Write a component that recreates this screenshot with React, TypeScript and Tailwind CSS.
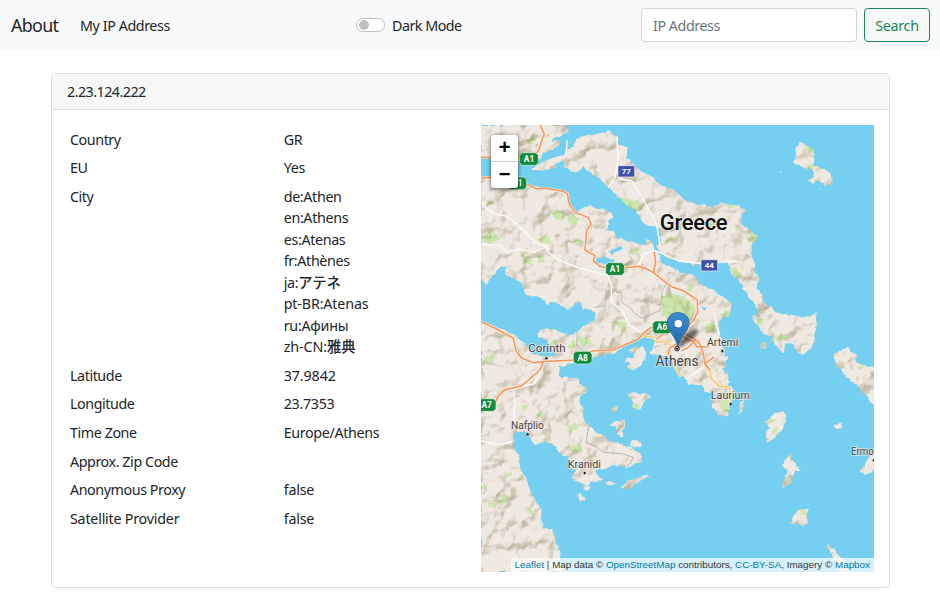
import type { ReactNode } from "react";

const MAINLAND =
  "M3,155 30,160 60,178 130,178 150,186 175,190 245,200 264,208 268,240 280,262 290,268 300,258 325,243 345,255 370,257 390,265 400,280 385,290 388,305 375,320 400,325 412,342 430,345 460,358 495,364 502,345 515,352 522,374 535,388 545,418 570,426 600,446 640,452 665,483 695,493 718,512 740,524 755,538 750,573 730,578 715,593 720,628 735,678 730,695 745,700 730,738 745,748 745,783 758,790 760,803 748,848 745,873 732,874 715,873 705,860 693,848 695,820 695,808 675,803 665,783 640,782 625,778 605,750 590,728 570,697 510,690 520,668 525,648 495,638 470,643 440,660 400,690 340,700 300,712 240,728 235,758 270,762 290,763 300,780 320,790 320,805 300,818 298,838 312,850 305,868 312,895 335,908 350,925 370,933 385,950 410,958 430,965 450,968 480,988 487,1013 462,1020 440,1032 430,1028 400,1024 380,1033 345,1043 355,1060 370,1066 345,1072 330,1073 322,1085 333,1093 320,1101 308,1092 315,1084 305,1078 275,1063 285,1040 268,1028 270,1008 260,998 240,993 225,965 200,952 165,963 140,928 125,920 110,923 98,933 105,950 103,975 118,1000 120,1038 140,1065 150,1098 165,1130 185,1158 182,1190 190,1213 215,1213 222,1240 235,1268 240,1298 250,1344 3,1344 3,593 60,610 105,633 130,658 160,688 190,698 225,693 215,678 200,648 172,638 180,618 210,611 240,625 265,633 290,628 305,608 340,593 345,563 310,556 300,533 265,556 250,548 210,533 205,545 195,533 175,518 135,513 125,478 75,448 80,428 65,423 55,438 30,458 20,486 3,463Z";

const ISLANDS = [
  "M3,3 185,3 260,3 265,18 238,40 220,42 213,54 240,48 232,68 205,82 190,88 186,100 165,112 120,112 75,105 35,100 3,100Z",
  "M155,137 175,120 200,108 230,98 258,88 258,75 278,70 285,50 310,36 350,30 370,26 380,18 390,20 395,30 410,35 415,60 440,70 443,85 438,100 448,110 470,135 495,148 510,155 530,172 555,190 580,195 600,215 610,228 645,238 695,248 725,238 760,240 798,258 785,270 783,300 820,325 835,338 815,360 815,395 825,420 827,448 838,465 828,492 850,513 847,533 875,553 885,563 915,573 960,580 975,580 1010,568 1004,630 1005,650 990,673 970,693 955,688 940,663 915,658 912,685 900,680 885,658 875,638 850,630 830,603 815,578 835,563 825,538 805,518 800,505 785,494 790,483 770,462 755,450 750,430 740,415 700,410 670,418 645,423 610,413 590,412 550,398 540,380 528,366 540,352 545,330 530,308 490,300 470,260 450,252 420,225 385,190 350,155 310,132 285,142 265,138 252,130 250,110 225,120 230,130 195,140Z",
  "M960,53 975,62 1000,78 1003,92 1002,122 1020,130 1052,148 1056,180 1035,185 1015,168 1000,180 985,168 1000,160 1002,138 975,132 950,122 938,115 950,95 945,75Z",
  "M895,140 903,140 903,145 895,145Z",
  "M1018,190 1027,192 1020,195Z",
  "M1062,690 1080,680 1105,668 1112,685 1130,690 1125,712 1145,722 1182,728 1182,845 1155,815 1140,795 1120,775 1100,760 1085,735 1070,728 1062,710Z",
  "M838,665 850,658 856,650 860,665 856,674 840,674Z",
  "M445,590 465,585 480,585 480,570 470,575 468,560 490,558 497,565 495,590 475,610 460,625 435,618 435,608 450,605Z",
  "M445,680 470,667 490,668 497,685 497,710 480,725 460,738 440,728 450,718 435,715 440,702 462,702 460,685Z",
  "M443,812 455,808 500,808 510,815 500,825 490,840 480,858 460,852 462,835 448,825Z",
  "M395,855 405,845 415,848 408,862 398,865Z",
  "M388,900 410,892 435,888 435,908 425,922 430,940 410,930 405,910Z",
  "M448,960 465,948 485,958 485,968 455,970Z",
  "M375,1073 395,1070 408,1075 400,1084 382,1082Z",
  "M420,1092 450,1068 480,1058 495,1054 512,1060 490,1065 470,1078 440,1095Z",
  "M287,1112 300,1108 315,1122 313,1132 300,1128Z",
  "M870,882 885,865 905,863 920,872 918,890 905,920 880,945 860,957 858,925 870,910 855,895Z",
  "M775,878 780,840 795,823 790,850Z",
  "M932,985 933,1000 945,1020 960,1038 945,1040 935,1070 915,1090 904,1095 912,1070 920,1040 905,1023Z",
  "M955,1158 985,1158 980,1175 985,1195 970,1210 960,1200 930,1200 940,1175Z",
  "M1040,1260 1065,1278 1080,1298 1095,1312 1105,1344 1075,1344 1058,1300Z",
  "M1182,980 1165,1003 1140,1038 1155,1053 1182,1040Z",
  "M1060,908 1070,900 1085,892 1085,913 1070,915Z",
];

const WATERS = [
  "M3,110 20,108 15,128 3,132Z",
  "M345,402 375,400 400,405 405,412 370,422 350,415Z",
  "M385,382 425,366 428,374 400,390Z",
  "M664,546 672,552 680,546 678,558 667,558Z",
];

const WOODS = [
  "M545,518 565,508 610,515 645,545 640,590 620,608 580,590 543,575 547,540Z",
  "M415,222 445,222 478,235 490,255 470,262 440,245Z",
  "M225,252 250,260 248,285 230,288 218,272Z",
  "M262,280 280,268 298,280 290,300 270,302Z",
  "M5,330 40,322 60,345 30,360 5,350Z",
  "M118,380 150,400 155,425 135,415Z",
  "M168,345 205,340 220,354 195,358Z",
  "M140,45 160,38 170,48 152,62 138,58Z",
  "M70,55 90,50 85,65Z",
  "M375,320 392,312 390,325Z",
  "M280,352 300,342 308,355 290,368Z",
  "M445,385 465,370 485,378 465,390Z",
  "M550,355 570,335 588,340 570,355Z",
  "M735,245 755,238 768,250 745,255Z",
  "M808,330 830,330 835,340 815,358 805,350Z",
  "M690,300 705,293 715,300 700,310Z",
  "M595,385 605,375 612,377 600,388Z",
  "M750,430 768,430 780,450 790,462 765,462Z",
  "M400,590 438,592 440,628 415,612Z",
  "M292,635 330,645 335,658 310,665 292,655Z",
  "M262,660 285,648 285,668 270,675Z",
  "M210,655 225,650 230,665 210,665Z",
  "M675,605 700,590 710,605 700,622 680,620Z",
  "M726,565 750,560 752,570 730,578Z",
  "M624,485 640,483 640,500 626,508Z",
  "M832,585 845,580 845,600 828,605Z",
  "M885,638 900,630 925,640 905,652 888,650Z",
  "M720,830 745,828 745,865 725,865Z",
  "M700,735 712,730 715,742 703,743Z",
  "M970,62 1000,78 1003,88 985,85Z",
  "M975,125 1002,120 1000,135 985,135Z",
  "M955,165 970,145 968,158 960,166Z",
  "M15,700 50,690 40,710 18,720Z",
  "M120,845 145,842 140,858 125,858Z",
  "M170,868 200,870 190,882 170,882Z",
  "M265,905 290,895 295,912 270,928Z",
  "M270,970 290,960 305,972 290,988 272,982Z",
  "M60,1125 75,1108 85,1125 68,1145 58,1140Z",
  "M135,1145 155,1155 160,1175 140,1165Z",
  "M5,1082 22,1085 20,1098 5,1095Z",
  "M25,1135 48,1138 45,1150 25,1148Z",
  "M80,1050 95,1042 95,1058 80,1060Z",
  "M23,232 40,230 38,244 26,243Z",
  "M172,395 190,395 195,415 175,415Z",
  "M870,885 890,885 885,895 872,893Z",
  "M875,915 895,910 890,930 875,932Z",
  "M955,1158 980,1160 975,1175 965,1172Z",
  "M1130,728 1150,722 1150,732 1135,738Z",
  "M455,835 480,840 475,852 460,850Z",
];

const MOTORWAYS = [
  "M180,3 193,30 185,50 178,75 165,95 120,103 80,105 3,99",
  "M3,163 30,160 90,166 140,180 170,195 190,192 250,202 262,210 268,240 285,265 325,280 333,300 320,320 315,378 345,395 340,410 360,427 400,435 475,427 500,435 520,445 550,470 575,488 610,500 640,520 652,528 653,565 640,590 620,610",
  "M523,385 527,415 520,445",
  "M3,593 50,615 100,643 108,680 125,702 160,716 200,712 280,709 340,680 400,678 440,660 475,645 490,628 510,612 530,608",
  "M190,714 180,738 145,768 125,785 75,797 55,815 45,838",
  "M530,645 550,630 560,620 600,622 620,632 645,645 660,660 670,690 675,720 690,738 675,720 700,700",
  "M600,630 625,650 640,650 650,668 685,668 M605,680 625,670 645,650",
  "M565,690 568,673 590,660 605,650",
];
const YELLOW_ROADS = [
  "M490,635 520,640 530,655 560,652 580,670 590,675",
  "M560,690 580,705 585,730 600,755",
  "M675,725 690,742 695,765 720,787 748,790 752,830",
];
const LOCAL_ROADS = [
  "M3,235 20,255 45,270 75,275 110,300 140,330 165,355 200,368 205,385 230,405 290,430 385,455 395,485 393,530 430,565 445,600 480,625",
  "M3,360 60,365 80,385 120,375 160,385 200,368",
  "M258,85 262,50 M385,190 405,160 415,100 410,40 M420,165 455,170 480,210 505,255 530,300 540,365",
  "M425,430 475,425 490,390 525,380 560,395 600,412 660,418 775,412",
  "M190,714 185,740 160,780 100,795 105,838 100,888 M3,950 30,957 65,962 95,952",
  "M705,575 710,610 718,630 M620,765 650,745 680,720 M600,720 620,690 610,675",
];
const BORDERS = [
  "M345,550 375,545 378,505 405,495 410,505 425,505 425,535 455,555 460,565 485,583 540,560 547,500 570,460",
  "M292,625 290,665 320,690",
  "M325,913 318,955 350,968 370,985 430,990 460,1000 450,1020 435,1028",
];

const SHIELDS: [number, number, string][] = [
  [147, 105, "A1"],
  [112, 178, "A1"],
  [405, 435, "A1"],
  [546, 610, "A6"],
  [308, 701, "A8"],
  [20, 843, "A7"],
];

const TOWNS: [number, number, number, string, number, number][] = [
  [201, 685, 112, "Corinth", 199, 703],
  [591, 725, 129, "Athens", 591, 674],
  [728, 665, 94, "Artemi", 727, 681],
  [751, 826, 117, "Laurium", 752, 840],
  [142, 915, 98, "Nafplio", 143, 931],
  [313, 1031, 99, "Kranidi", 314, 1047],
  [1147, 992, 68, "Ermo", 1182, 1009],
];

function Lines({ list, color, width, dash }: { list: string[]; color: string; width: number; dash?: string }) {
  return (
    <g fill="none" stroke={color} strokeWidth={width} strokeLinejoin="round" strokeLinecap="round" strokeDasharray={dash}>
      {list.map((d) => (
        <path key={d} d={d} />
      ))}
    </g>
  );
}

function MapDrawing() {
  return (
    <svg className="block h-full w-full" viewBox="3 3 1179 1341" preserveAspectRatio="none">
      <defs>
        <filter id="relief" x="0" y="0" width="100%" height="100%" colorInterpolationFilters="sRGB">
          <feTurbulence type="fractalNoise" baseFrequency="0.015" numOctaves="3" seed="8" />
          <feColorMatrix values="0 0 0 0 0  0 0 0 0 0  0 0 0 0 0  2.2 0 0 0 -0.75" />
          <feDiffuseLighting surfaceScale="13" diffuseConstant="1.22" lightingColor="#ffffff">
            <feDistantLight azimuth="225" elevation="57" />
          </feDiffuseLighting>
          <feColorMatrix values="0.25 0 0 0 0.75  0 0.26 0 0 0.74  0 0 0.36 0 0.64  0 0 0 1 0" />
        </filter>
        <filter id="coast" x="-5%" y="-5%" width="110%" height="110%" colorInterpolationFilters="sRGB">
          <feTurbulence type="fractalNoise" baseFrequency="0.06" numOctaves="2" seed="3" />
          <feDisplacementMap in="SourceGraphic" scale="12" xChannelSelector="R" yChannelSelector="G" />
        </filter>
        <filter id="soft" x="-50%" y="-50%" width="200%" height="200%">
          <feGaussianBlur stdDeviation="5" />
        </filter>
        <clipPath id="land">
          <path d={MAINLAND} />
          {ISLANDS.map((d) => (
            <path key={d} d={d} />
          ))}
        </clipPath>
        <linearGradient id="pin" x1="0" y1="0" x2="0" y2="1">
          <stop offset="0" stopColor="#3c8ed0" />
          <stop offset="1" stopColor="#2268a8" />
        </linearGradient>
      </defs>
      <rect width="1190" height="1350" fill="#75cff0" />
      <g filter="url(#coast)">
        <g clipPath="url(#land)">
          <rect width="1190" height="1350" fill="#f0e9e2" />
          <g fill="#cde6ae">
            {WOODS.map((d) => (
              <path key={d} d={d} />
            ))}
          </g>
          <g className="mix-blend-multiply">
            <rect width="1190" height="1350" filter="url(#relief)" />
          </g>
        </g>
        <g fill="#75cff0">
          {WATERS.map((d) => (
            <path key={d} d={d} />
          ))}
        </g>
      </g>
      <Lines list={BORDERS} color="#b5b3b8" width={3} dash="8 3" />
      <Lines list={LOCAL_ROADS} color="#fbfaf7" width={4.5} />
      <Lines list={YELLOW_ROADS} color="#fff6dd" width={8} />
      <Lines list={YELLOW_ROADS} color="#f3c86b" width={4.5} />
      <Lines list={MOTORWAYS} color="#fdeee0" width={8} />
      <Lines list={MOTORWAYS} color="#f3945a" width={4.5} />

      {SHIELDS.map(([x, y, name]) => (
        <g key={`${x}-${y}`} transform={`translate(${x} ${y})`}>
          <path d="M-20,-19 20,-19 28,-11 28,11 20,19 -20,19 -28,11 -28,-11Z" fill="#0f8c3c" stroke="#e9f0e2" strokeWidth="2" />
          <text y="9" textAnchor="middle" fill="#fff" className="font-['Roboto',sans-serif] text-[25px] font-bold">
            {name}
          </text>
        </g>
      ))}
      {([[439, 142, "77"], [688, 424, "44"]] as [number, number, string][]).map(([x, y, name]) => (
        <g key={name} transform={`translate(${x} ${y})`}>
          <rect x="-25" y="-17" width="50" height="34" rx="4" fill="#3f50a5" stroke="#eef0f4" strokeWidth="2" />
          <text y="8" textAnchor="middle" fill="#fff" className="font-['Roboto',sans-serif] text-[24px] font-bold">
            {name}
          </text>
        </g>
      ))}

      <text
        x="539"
        y="319"
        textLength="204"
        lengthAdjust="spacing"
        fill="#111"
        stroke="#fff"
        strokeWidth="5"
        strokeOpacity="0.6"
        paintOrder="stroke"
        className="font-['Roboto',sans-serif] text-[66px] font-medium"
      >
        Greece
      </text>
      {TOWNS.map(([x, y, w, name, dx, dy]) => (
        <g key={name}>
          <text
            x={x - w / 2}
            y={y}
            textLength={w}
            lengthAdjust="spacingAndGlyphs"
            fill="#414246"
            stroke="#f6f3ee"
            strokeWidth="5"
            strokeOpacity="0.75"
            paintOrder="stroke"
            className={name === "Athens" ? "font-['Roboto',sans-serif] text-[43px]" : "font-['Roboto',sans-serif] text-[35px]"}
          >
            {name}
          </text>
          <circle cx={dx} cy={dy} r="4.5" fill="#111" stroke="#fff" strokeWidth="1.5" />
        </g>
      ))}

      <path d="M592,672 C606,640 625,612 648,615 C668,622 636,652 592,672Z" fill="#000" opacity="0.55" filter="url(#soft)" />
      <circle cx="591" cy="674" r="7" fill="none" stroke="#333" strokeWidth="3" />
      <path
        d="M594,670 C590,640 563,622 562,597 C562,577 577,566 594,566 C611,566 627,577 627,597 C626,622 598,640 594,670Z"
        fill="url(#pin)"
        stroke="#2b6da5"
        strokeWidth="3"
      />
      <circle cx="595" cy="599" r="11" fill="#fff" />
    </svg>
  );
}

function Row({ label, children }: { label: ReactNode; children?: ReactNode }) {
  return (
    <div className="flex py-[3.6px]">
      <div className="w-[213.7px] shrink-0 tracking-[-0.43px]">{label}</div>
      <div className="tracking-[-0.35px]">{children}</div>
    </div>
  );
}

function Credit({ children }: { children: ReactNode }) {
  return <span className="text-[#0078a8]">{children}</span>;
}

export default function App() {
  return (
    <div className="h-[597px] w-[940px] overflow-hidden bg-white font-['Noto_Sans','Noto_Sans_CJK_JP',sans-serif] text-[14.3px] leading-[21.45px] text-[#212529]">
      <nav className="flex h-[50px] items-center bg-[#f8f9fa] pr-[10px] pl-[11px]">
        <div className="w-[69px] pt-[2px] text-[17.9px] tracking-[-0.7px]">About</div>
        <div className="w-[276px] pt-[2px] tracking-[-0.42px]">My IP Address</div>
        <div className="flex h-[14px] w-[29px] items-center rounded-full border border-[#bfbfbf] bg-white pl-[2px]">
          <div className="size-[10px] rounded-full bg-[#bfbfbf]" />
        </div>
        <div className="ml-[7px] pt-[2px] tracking-[-0.5px]">Dark Mode</div>
        <input
          className="ml-auto h-[34px] w-[216px] rounded-[4px] border border-[#ced4da] bg-white px-[11px] pt-[1px] tracking-[-0.45px] placeholder:text-[#6c757d]"
          placeholder="IP Address"
        />
        <button className="ml-[7px] h-[34px] w-[66px] rounded-[4px] border border-[#198754] pt-[2px] tracking-[-0.3px] text-[#198754]">Search</button>
      </nav>

      <main className="mt-[23px] ml-[51px] h-[515px] w-[839px] rounded-[4px] border border-[#dfdfdf]">
        <div className="flex h-[36px] items-center rounded-t-[3px] border-b border-[#dfdfdf] bg-[#f7f7f7] px-[15px] tracking-[-0.53px]">2.23.124.222</div>
        <div className="flex pt-[15px]">
          <div className="w-[429px] pl-[18px]">
            <Row label="Country">GR</Row>
            <Row label="EU">Yes</Row>
            <Row label="City">
              <div>de:Athen</div>
              <div>en:Athens</div>
              <div>es:Atenas</div>
              <div>fr:Athènes</div>
              <div className="h-[21.45px]">
                ja:<span className="font-medium tracking-[-0.2px]">アテネ</span>
              </div>
              <div className="tracking-[-0.15px]">pt-BR:Atenas</div>
              <div className="tracking-[-0.25px]">ru:Афины</div>
              <div className="h-[21.45px] tracking-[-0.1px]">
                zh-CN:<span className="font-medium">雅典</span>
              </div>
            </Row>
            <Row label="Latitude">
              <span className="tracking-[-0.12px]">37.9842</span>
            </Row>
            <Row label="Longitude">
              <span className="tracking-[-0.3px]">23.7353</span>
            </Row>
            <Row label="Time Zone">Europe/Athens</Row>
            <Row label="Approx. Zip Code" />
            <Row label="Anonymous Proxy">
              <span className="tracking-[-0.2px]">false</span>
            </Row>
            <Row label={<span className="tracking-[-0.23px]">Satellite Provider</span>}>
              <span className="tracking-[-0.2px]">false</span>
            </Row>
          </div>
          <div className="relative h-[447px] w-[393px] overflow-hidden">
            <MapDrawing />
            <div className="absolute top-[10px] left-[10px] w-[27px] rounded-[3px] bg-white text-center font-['Liberation_Sans',sans-serif] text-[20px] leading-[25px] font-bold text-black shadow-[0_1px_4px_rgba(0,0,0,0.65)]">
              <div className="h-[27px] border-b border-[#ccc]">+</div>
              <div className="h-[26px]">−</div>
            </div>
            <div className="absolute right-0 bottom-0 h-[14px] bg-white/70 px-[4px] font-['Liberation_Sans',sans-serif] text-[9.85px] leading-[14px] whitespace-nowrap text-[#333]">
              <Credit>Leaflet</Credit> | Map data © <Credit>OpenStreetMap</Credit> contributors, <Credit>CC-BY-SA</Credit>, Imagery © <Credit>Mapbox</Credit>
            </div>
          </div>
        </div>
      </main>
    </div>
  );
}
